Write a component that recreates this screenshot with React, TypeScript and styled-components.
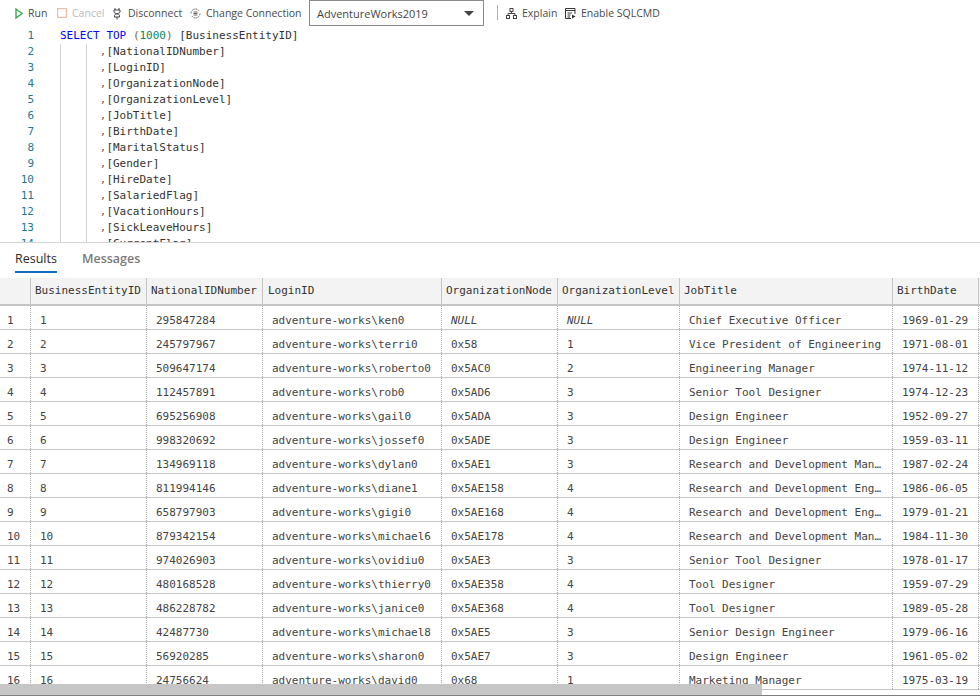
import React from "react";
import styled, { createGlobalStyle } from "styled-components";

const Global = createGlobalStyle`
  html, body { margin: 0; padding: 0; background: #fff; overflow: hidden; }
  * { box-sizing: border-box; }
`;

const UI = `"Open Sans", "Noto Sans", sans-serif`;
const MONO = `"DejaVu Sans Mono", "Liberation Mono", monospace`;
const COLS = "31px 116px 116px 179px 116px 122px 213px 86px";

const Page = styled.div`
  width: 980px;
  height: 696px;
  display: flex;
  flex-direction: column;
  overflow: hidden;
  background: #fff;
  border-bottom: 1px solid #7f7f7f;
`;

const Toolbar = styled.div`
  height: 27px;
  flex: none;
  display: flex;
  align-items: flex-start;
  padding-left: 15px;
  font: 10.5px ${UI};
  color: #444;
`;

const ToolButton = styled.div<{ $w: number; $gap?: number; $muted?: boolean }>`
  width: ${(p) => p.$w}px;
  height: 26px;
  flex: none;
  display: flex;
  align-items: center;
  gap: ${(p) => p.$gap ?? 5}px;
  white-space: nowrap;
  color: ${(p) => (p.$muted ? "#bbb" : "#4a4a4a")};
  svg { flex: none; display: block; }
`;

const Select = styled.div`
  width: 175px;
  height: 26px;
  flex: none;
  margin-right: 13px;
  border: 1px solid #8a8a8a;
  display: flex;
  align-items: center;
  justify-content: space-between;
  padding: 0 9px 0 7px;
  font: 11px ${UI};
  color: #444;
`;

const Caret = styled.span`
  width: 0;
  height: 0;
  border-left: 5px solid transparent;
  border-right: 5px solid transparent;
  border-top: 5px solid #444;
`;

const Separator = styled.div`
  width: 1px;
  height: 15px;
  margin: 5px 8px 0 0;
  flex: none;
  background: #b0b0b0;
`;

const Editor = styled.div`
  height: 216px;
  flex: none;
  overflow: hidden;
  padding-top: 1px;
  font: 11px/16px ${MONO};
  border-bottom: 1px solid #d4d4d4;
  color: #333;
`;

const CodeLine = styled.div`
  height: 16px;
  display: flex;
  white-space: pre;
`;

const LineNo = styled.span`
  width: 34px;
  flex: none;
  text-align: right;
  color: #237893;
`;

const Code = styled.span<{ $guides?: boolean }>`
  margin-left: 26px;
  flex: 1;
  ${(p) =>
    p.$guides
      ? `background:
      linear-gradient(#d3d3d3, #d3d3d3) 0 0 / 1px 100% no-repeat,
      linear-gradient(#d3d3d3, #d3d3d3) 26px 0 / 1px 100% no-repeat;`
      : ""}
`;

const Kw = styled.span`color: #0000ff;`;
const Num = styled.span`color: #09885a;`;
const Gray = styled.span`color: #666;`;

const Tabs = styled.div`
  height: 35px;
  flex: none;
  display: flex;
  padding-left: 15px;
  gap: 25px;
  font: 12.5px ${UI};
`;

const Tab = styled.div<{ $active?: boolean }>`
  height: 30px;
  padding-top: 6px;
  line-height: 19px;
  color: ${(p) => (p.$active ? "#2b2b2b" : "#7a7a7a")};
  font-weight: ${(p) => (p.$active ? 500 : 600)};
  border-bottom: 2px solid ${(p) => (p.$active ? "#106ebe" : "transparent")};
`;

const Grid = styled.div`
  position: relative;
  flex: 1;
  min-height: 0;
  overflow: hidden;
  font: 11px ${MONO};
`;

const HeaderRow = styled.div`
  display: grid;
  grid-template-columns: ${COLS};
  width: 980px;
  height: 28px;
  background: #f3f3f3;
  border-bottom: 2px solid #c4c4c4;
  color: #333;
`;

const HeaderCell = styled.div`
  border-right: 1px solid #c4c4c4;
  padding-left: 4px;
  line-height: 25px;
  white-space: nowrap;
  overflow: hidden;
  &:nth-child(4) { padding-left: 5px; }
`;

const Row = styled.div`
  display: grid;
  grid-template-columns: ${COLS};
  width: 980px;
  height: 24px;
  border-bottom: 1px solid #c4c4c4;
  color: #444;
`;

const Cell = styled.div<{ $italic?: boolean; $index?: boolean }>`
  border-right: 1px dotted #a8a8a8;
  padding: 0 ${(p) => (p.$index ? 0 : 9)}px 0 ${(p) => (p.$index ? 7 : 9)}px;
  line-height: 29px;
  white-space: nowrap;
  overflow: hidden;
  text-overflow: ellipsis;
  font-style: ${(p) => (p.$italic ? "italic" : "normal")};
`;

const Scrollbar = styled.div`
  position: absolute;
  left: 0;
  bottom: 0;
  width: 762px;
  height: 11px;
  background: #c6c6c6;
`;

const codeLines = [
  "NationalIDNumber",
  "LoginID",
  "OrganizationNode",
  "OrganizationLevel",
  "JobTitle",
  "BirthDate",
  "MaritalStatus",
  "Gender",
  "HireDate",
  "SalariedFlag",
  "VacationHours",
  "SickLeaveHours",
  "CurrentFlag",
];

const headers = ["", "BusinessEntityID", "NationalIDNumber", "LoginID", "OrganizationNode", "OrganizationLevel", "JobTitle", "BirthDate"];

const rows: string[][] = [
  ["295847284", "ken0", "NULL", "NULL", "Chief Executive Officer", "1969-01-29"],
  ["245797967", "terri0", "0x58", "1", "Vice President of Engineering", "1971-08-01"],
  ["509647174", "roberto0", "0x5AC0", "2", "Engineering Manager", "1974-11-12"],
  ["112457891", "rob0", "0x5AD6", "3", "Senior Tool Designer", "1974-12-23"],
  ["695256908", "gail0", "0x5ADA", "3", "Design Engineer", "1952-09-27"],
  ["998320692", "jossef0", "0x5ADE", "3", "Design Engineer", "1959-03-11"],
  ["134969118", "dylan0", "0x5AE1", "3", "Research and Development Manager", "1987-02-24"],
  ["811994146", "diane1", "0x5AE158", "4", "Research and Development Engineer", "1986-06-05"],
  ["658797903", "gigi0", "0x5AE168", "4", "Research and Development Engineer", "1979-01-21"],
  ["879342154", "michael6", "0x5AE178", "4", "Research and Development Manager", "1984-11-30"],
  ["974026903", "ovidiu0", "0x5AE3", "3", "Senior Tool Designer", "1978-01-17"],
  ["480168528", "thierry0", "0x5AE358", "4", "Tool Designer", "1959-07-29"],
  ["486228782", "janice0", "0x5AE368", "4", "Tool Designer", "1989-05-28"],
  ["42487730", "michael8", "0x5AE5", "3", "Senior Design Engineer", "1979-06-16"],
  ["56920285", "sharon0", "0x5AE7", "3", "Design Engineer", "1961-05-02"],
  ["24756624", "david0", "0x68", "1", "Marketing Manager", "1975-03-19"],
];

const RunIcon = () => (
  <svg width="8" height="11" viewBox="0 0 8 11">
    <path d="M1 1 L7 5.5 L1 10 Z" fill="none" stroke="#3fae5a" strokeWidth="1.5" />
  </svg>
);
const CancelIcon = () => (
  <svg width="10" height="10" viewBox="0 0 10 10">
    <rect x="0.5" y="0.5" width="9" height="9" fill="none" stroke="#efb9ab" strokeWidth="1.4" />
  </svg>
);
const DisconnectIcon = () => (
  <svg width="8" height="13" viewBox="0 0 8 13" fill="none" stroke="#444" strokeWidth="1">
    <path d="M2 1 V3 M6 1 V3 M1 3 H7 V5 C7 6 5 6.500 4 6.500 C3 6.500 1 6 1 5 Z" />
    <path d="M1.500 8.500 C1.500 7.500 3 7 4 7 C5 7 6.500 7.500 6.500 8.500 V10 H1.500 Z M4 10 V12.500" />
  </svg>
);
const ChangeIcon = () => (
  <svg width="11" height="11" viewBox="0 0 11 11" fill="none" stroke="#555" strokeWidth="0.9">
    <path d="M1 5.500 A4.500 4.500 0 0 1 9 2.700" strokeDasharray="1.600 0.700" />
    <path d="M10 5.500 A4.500 4.500 0 0 1 2 8.300" strokeDasharray="1.600 0.700" />
    <path d="M3.500 4 H7.500 M3.500 5.500 H7.500 M3.500 7 H7.500" />
  </svg>
);
const ExplainIcon = () => (
  <svg width="11" height="11" viewBox="0 0 11 11" fill="none" stroke="#444" strokeWidth="1">
    <rect x="4" y="0.500" width="3" height="3" />
    <rect x="0.500" y="7.500" width="3" height="3" />
    <rect x="7.500" y="7.500" width="3" height="3" />
    <path d="M5.500 3.500 V5.500 M2 7.500 V5.500 H9 V7.500" />
  </svg>
);
const SqlIcon = () => (
  <svg width="11" height="11" viewBox="0 0 11 11" fill="none" stroke="#333" strokeWidth="1">
    <path d="M6 10.500 H0.500 V0.500 H10 V6" />
    <path d="M0.500 2.500 H10 M2.500 5 H7 M2.500 7 H5.500 M2.500 9 H5" />
    <path d="M7 6.500 L10.500 8.500 L7 10.500 Z" fill="#333" stroke="none" />
  </svg>
);

export default function App() {
  return (
    <Page>
      <Global />
      <Toolbar>
        <ToolButton $w={42}><RunIcon />Run</ToolButton>
        <ToolButton $w={56} $muted><CancelIcon />Cancel</ToolButton>
        <ToolButton $w={77} $gap={7}><DisconnectIcon />Disconnect</ToolButton>
        <ToolButton $w={119}><ChangeIcon />Change Connection</ToolButton>
        <Select>AdventureWorks2019<Caret /></Select>
        <Separator />
        <ToolButton $w={59}><ExplainIcon />Explain</ToolButton>
        <ToolButton $w={100}><SqlIcon />Enable SQLCMD</ToolButton>
      </Toolbar>
      <Editor>
        <CodeLine>
          <LineNo>1</LineNo>
          <Code>
            <Kw>SELECT</Kw> <Kw>TOP</Kw> <Gray>(</Gray><Num>1000</Num><Gray>)</Gray> [BusinessEntityID]
          </Code>
        </CodeLine>
        {codeLines.map((name, i) => (
          <CodeLine key={name}>
            <LineNo>{i + 2}</LineNo>
            <Code $guides>{"      "}<Gray>,</Gray>[{name}]</Code>
          </CodeLine>
        ))}
      </Editor>
      <Tabs>
        <Tab $active>Results</Tab>
        <Tab>Messages</Tab>
      </Tabs>
      <Grid>
        <HeaderRow>
          {headers.map((h) => <HeaderCell key={h || "corner"}>{h}</HeaderCell>)}
        </HeaderRow>
        {rows.map((r, i) => (
          <Row key={r[0]}>
            <Cell $index>{i + 1}</Cell>
            <Cell>{i + 1}</Cell>
            <Cell>{r[0]}</Cell>
            <Cell>adventure-works\{r[1]}</Cell>
            <Cell $italic={r[2] === "NULL"}>{r[2]}</Cell>
            <Cell $italic={r[3] === "NULL"}>{r[3]}</Cell>
            <Cell>{r[4]}</Cell>
            <Cell>{r[5]}</Cell>
          </Row>
        ))}
        <Scrollbar />
      </Grid>
    </Page>
  );
}
